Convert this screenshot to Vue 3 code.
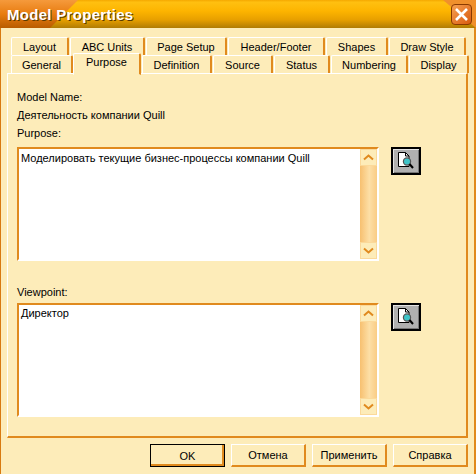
<template>
  <div class="window">
    <div class="titlebar">
      <span class="title">Model Properties</span>
      <button class="close" aria-label="Close">
        <svg width="15" height="15" viewBox="0 0 15 15">
          <path d="M2 2 L13 13 M13 2 L2 13" stroke="#fff" stroke-width="2.6" fill="none" />
        </svg>
      </button>
    </div>
    <div class="body">
      <div class="tab-row back">
        <div v-for="t in topTabs" :key="t.name" class="tab" :style="{ width: t.width + 'px' }">{{ t.name }}</div>
      </div>
      <div class="tab-row front">
        <div
          v-for="t in bottomTabs"
          :key="t.name"
          class="tab"
          :class="{ active: t.active }"
          :style="{ width: t.width + 'px' }"
        >{{ t.name }}</div>
      </div>
      <div class="pane">
        <div class="label first">Model Name:</div>
        <div class="label value">Деятельность компании Quill</div>
        <div class="label purpose">Purpose:</div>
        <div class="field-row">
          <div class="memo">
            <div class="memo-text">Моделировать текущие бизнес-процессы компании Quill</div>
            <div class="scrollbar">
              <div class="arrow">
                <svg width="11" height="7" viewBox="0 0 11 7"><path d="M1 5.5 L5.5 1.5 L10 5.5" class="chev" /></svg>
              </div>
              <div class="track"></div>
              <div class="arrow">
                <svg width="11" height="7" viewBox="0 0 11 7"><path d="M1 1.5 L5.5 5.5 L10 1.5" class="chev" /></svg>
              </div>
            </div>
          </div>
          <button class="preview" aria-label="Preview">
            <svg width="20" height="20" viewBox="0 0 20 20">
              <path d="M2.5 1.5 H9.5 L13 5 V15.5 H2.5 Z" fill="#fff" stroke="#000" />
              <path d="M9.5 1.5 V5 H13" fill="none" stroke="#000" />
              <circle cx="11" cy="10.5" r="3.6" fill="#3fc4c8" stroke="#555" stroke-width="1.2" />
              <path d="M13.5 13 L17 17" stroke="#000" stroke-width="2" />
            </svg>
          </button>
        </div>
        <div class="label viewpoint">Viewpoint:</div>
        <div class="field-row">
          <div class="memo">
            <div class="memo-text second">Директор</div>
            <div class="scrollbar">
              <div class="arrow">
                <svg width="11" height="7" viewBox="0 0 11 7"><path d="M1 5.5 L5.5 1.5 L10 5.5" class="chev" /></svg>
              </div>
              <div class="track"></div>
              <div class="arrow">
                <svg width="11" height="7" viewBox="0 0 11 7"><path d="M1 1.5 L5.5 5.5 L10 1.5" class="chev" /></svg>
              </div>
            </div>
          </div>
          <button class="preview" aria-label="Preview">
            <svg width="20" height="20" viewBox="0 0 20 20">
              <path d="M2.5 1.5 H9.5 L13 5 V15.5 H2.5 Z" fill="#fff" stroke="#000" />
              <path d="M9.5 1.5 V5 H13" fill="none" stroke="#000" />
              <circle cx="11" cy="10.5" r="3.6" fill="#3fc4c8" stroke="#555" stroke-width="1.2" />
              <path d="M13.5 13 L17 17" stroke="#000" stroke-width="2" />
            </svg>
          </button>
        </div>
      </div>
      <div class="actions">
        <button class="btn default">OK</button>
        <button class="btn">Отмена</button>
        <button class="btn">Применить</button>
        <button class="btn">Справка</button>
      </div>
    </div>
  </div>
</template>

<script setup>
const topTabs = [
  { name: 'Layout', width: 58 },
  { name: 'ABC Units', width: 75 },
  { name: 'Page Setup', width: 81 },
  { name: 'Header/Footer', width: 97 },
  { name: 'Shapes', width: 62 },
  { name: 'Draw Style', width: 77 }
]

const bottomTabs = [
  { name: 'General', width: 62 },
  { name: 'Purpose', width: 68, active: true },
  { name: 'Definition', width: 70 },
  { name: 'Source', width: 60 },
  { name: 'Status', width: 56 },
  { name: 'Numbering', width: 77 },
  { name: 'Display', width: 60 }
]
</script>

<style>
html,
body {
  margin: 0;
  background: #fdecb9;
}
</style>

<style scoped>
.window {
  width: 476px;
  height: 474px;
  box-sizing: border-box;
  overflow: hidden;
  background: #fdecb9;
  font-family: "Liberation Sans", Arial, sans-serif;
  font-size: 11px;
  color: #000;
}

.titlebar {
  position: relative;
  height: 28px;
  box-sizing: border-box;
  display: flex;
  align-items: center;
  justify-content: space-between;
  padding: 0 4px 0 7px;
  background: linear-gradient(180deg, #f5a800 0, #ffc010 8%, #fdb400 40%, #e8a000 70%, #b07c04 100%);
}

.titlebar::before {
  content: "";
  position: absolute;
  left: 0;
  top: 0;
  width: 78px;
  height: 28px;
  background: linear-gradient(180deg, #f59a3c 0, #e87c10 50%, #b85c00 100%);
  clip-path: polygon(0 0, 100% 0, 50px 100%, 0 100%);
}

.titlebar::after {
  content: "";
  position: absolute;
  right: 0;
  top: 0;
  width: 33px;
  height: 28px;
  background: #f0902c;
  clip-path: polygon(0 0, 100% 0, 100% 100%);
}

.title {
  position: relative;
  z-index: 1;
  padding-top: 1px;
  font-family: "Liberation Sans", Arial, sans-serif;
  font-weight: 700;
  font-size: 15px;
  letter-spacing: 0.3px;
  color: #fff;
  text-shadow: 1px 1px 0 #5a3a00;
}

.close {
  position: relative;
  z-index: 1;
  width: 21px;
  height: 21px;
  padding: 0;
  display: flex;
  align-items: center;
  justify-content: center;
  border: 1px solid #8a3a00;
  border-radius: 4px;
  background: linear-gradient(135deg, #f7a050, #d85a10);
}

.body {
  height: 446px;
  box-sizing: border-box;
  padding: 9px 1px 0 1px;
  border-left: 1px solid #d87a10;
  border-right: 2px solid #e08a1e;
}

.tab-row {
  display: flex;
  gap: 1px;
  margin-left: 9px;
}

.tab-row.back {
  height: 18px;
}

.tab-row.front {
  height: 18px;
  position: relative;
  z-index: 1;
}

.tab {
  height: 18px;
  box-sizing: border-box;
  display: flex;
  align-items: center;
  justify-content: center;
  padding-top: 1px;
  border-top: 1px solid #fff;
  border-left: 1px solid #fff;
  border-right: 2px solid #e08a1e;
  border-radius: 2px 2px 0 0;
  background: #fdecb9;
}

.tab.active {
  position: relative;
  height: 22px;
  margin-top: -2px;
  margin-left: -1px;
  padding-bottom: 5px;
  border-bottom: 1px solid #fdecb9;
}

.pane {
  margin-left: 5px;
  width: 461px;
  height: 365px;
  box-sizing: border-box;
  padding: 0 0 0 9px;
  border-top: 1px solid #fff;
  border-left: 1px solid #fff;
  border-right: 2px solid #e08a1e;
  border-bottom: 2px solid #e08a1e;
}

.label {
  line-height: 14px;
}

.label.first {
  margin-top: 16px;
}

.label.value {
  margin-top: 4px;
}

.label.purpose {
  margin-top: 4px;
  margin-bottom: 7px;
}

.label.viewpoint {
  margin-top: 24px;
  margin-bottom: 4px;
}

.field-row {
  display: flex;
  align-items: flex-start;
  gap: 12px;
  margin-top: 1px;
}

.memo {
  width: 362px;
  height: 114px;
  box-sizing: border-box;
  display: flex;
  border-top: 2px solid #e08a1e;
  border-left: 2px solid #e08a1e;
  border-right: 2px solid #fff;
  border-bottom: 2px solid #fff;
  background: #fff;
}

.memo-text {
  flex: 1;
  padding: 2px 0 0 2px;
  line-height: 14px;
}

.memo-text.second {
  padding-top: 1px;
}

.scrollbar {
  width: 17px;
  display: flex;
  flex-direction: column;
  background: #fdecb9;
}

.arrow {
  height: 17px;
  box-sizing: border-box;
  display: flex;
  align-items: center;
  justify-content: center;
  border: 1px solid #fbd99a;
  background: #fdecb9;
}

.chev {
  fill: none;
  stroke: #e08a1e;
  stroke-width: 2;
}

.track {
  flex: 1;
  background: linear-gradient(90deg, #f7c070, #fddfa6 55%, #f9cc85);
}

.preview {
  width: 30px;
  height: 28px;
  padding: 0;
  display: flex;
  align-items: center;
  justify-content: center;
  box-sizing: border-box;
  border: 2px solid #000;
  background: #b0b0b0;
  box-shadow: inset 1px 1px 0 #e4e4e4, inset -1px -1px 0 #777;
}

.actions {
  display: flex;
  gap: 6px;
  margin: 6px 0 0 148px;
}

.btn {
  width: 75px;
  height: 23px;
  padding: 0;
  box-sizing: border-box;
  font: inherit;
  color: #000;
  background: #fdecb9;
  border-top: 1px solid #fff;
  border-left: 1px solid #fff;
  border-right: 2px solid #e08a1e;
  border-bottom: 2px solid #e08a1e;
}

.btn.default {
  outline: 1px solid #000;
  outline-offset: -1px;
  box-shadow: inset -2px -2px 0 #e08a1e;
  border: 1px solid transparent;
}
</style>
